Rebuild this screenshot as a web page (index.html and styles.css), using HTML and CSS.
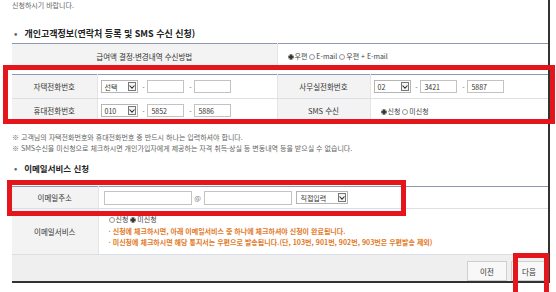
FILE: index.html
```html
<!DOCTYPE html>
<html lang="ko">
<head>
    <meta charset="UTF-8">
    <title>개인고객정보 신청</title>
    <link rel="stylesheet" href="styles.css">
</head>
<body>
<div class="page">
    <div class="frame">
        <p class="intro">신청하시기 바랍니다.</p>

        <h3 class="sec-title">개인고객정보(연락처 등록 및 SMS 수신 신청)</h3>
        <table class="form-table">
            <tr class="row-a">
                <th class="th-wide">급여액 결정·변경내역 수신방법</th>
                <td class="td-pad"><span class="radio on"></span>우편 <span class="radio"></span>E-mail <span class="radio"></span>우편 + E-mail</td>
            </tr>
        </table>

        <table class="form-table phone-table">
            <colgroup>
                <col style="width:85px"><col style="width:180px"><col style="width:93px"><col>
            </colgroup>
            <tr>
                <th>자택전화번호</th>
                <td>
                    <span class="sel"><span class="sel-text">선택</span><span class="arr"><svg width="6" height="4" viewBox="0 0 6 4"><path d="M0.5 0.5 L3 3.2 L5.5 0.5" fill="none" stroke="#333" stroke-width="1.1"/></svg></span></span>
                    <span class="dash">-</span><input class="num" type="text" value="">
                    <span class="dash">-</span><input class="num" type="text" value="">
                </td>
                <th>사무실전화번호</th>
                <td>
                    <span class="sel"><span class="sel-text">02</span><span class="arr"><svg width="6" height="4" viewBox="0 0 6 4"><path d="M0.5 0.5 L3 3.2 L5.5 0.5" fill="none" stroke="#333" stroke-width="1.1"/></svg></span></span>
                    <span class="dash">-</span><input class="num" type="text" value="3421">
                    <span class="dash">-</span><input class="num" type="text" value="5887">
                </td>
            </tr>
            <tr>
                <th>휴대전화번호</th>
                <td>
                    <span class="sel"><span class="sel-text">010</span><span class="arr"><svg width="6" height="4" viewBox="0 0 6 4"><path d="M0.5 0.5 L3 3.2 L5.5 0.5" fill="none" stroke="#333" stroke-width="1.1"/></svg></span></span>
                    <span class="dash">-</span><input class="num" type="text" value="5852">
                    <span class="dash">-</span><input class="num" type="text" value="5886">
                </td>
                <th>SMS 수신</th>
                <td class="td-pad"><span class="radio on"></span>신청 <span class="radio"></span>미신청</td>
            </tr>
        </table>

        <div class="notes">
            <p>※ 고객님의 자택전화번호와 휴대전화번호 중 반드시 하나는 입력하셔야 합니다.</p>
            <p>※ SMS수신을 미신청으로 체크하시면 개인가입자에게 제공하는 자격 취득·상실 등 변동내역 등을 받으실 수 없습니다.</p>
        </div>

        <h3 class="sec-title sec-two">이메일서비스 신청</h3>
        <table class="form-table email-table">
            <colgroup>
                <col style="width:86px"><col>
            </colgroup>
            <tr class="row-mail">
                <th>이메일주소</th>
                <td>
                    <input class="mail" type="text" value=""><span class="at">@</span><input class="mail" type="text" value="">
                    <span class="sel sel-mail"><span class="sel-text">직접입력</span><span class="arr"><svg width="6" height="4" viewBox="0 0 6 4"><path d="M0.5 0.5 L3 3.2 L5.5 0.5" fill="none" stroke="#333" stroke-width="1.1"/></svg></span></span>
                </td>
            </tr>
            <tr class="row-service">
                <th>이메일서비스</th>
                <td class="td-pad">
                    <p class="line"><span class="radio"></span>신청 <span class="radio on"></span>미신청</p>
                    <p class="line warn">· 신청에 체크하시면, 아래 이메일서비스 중 하나에 체크하셔야 신청이 완료됩니다.</p>
                    <p class="line warn">· 미신청에 체크하시면 해당 통지서는 우편으로 발송됩니다.(단, 103번, 901번, 902번, 903번은 우편발송 제외)</p>
                </td>
            </tr>
        </table>

        <div class="footer">
            <button class="btn">이전</button>
            <button class="btn btn-next">다음</button>
        </div>
    </div>

    <!-- red highlight marks drawn over the form -->
    <div class="mark mark-phone"></div>
    <div class="mark mark-mail"></div>
    <div class="mark mark-next"></div>
</div>
</body>
</html>
```

FILE: styles.css
```css
* {
    box-sizing: border-box;
}
body {
    margin: 0;
    background: #fff;
    font-family: "Noto Sans CJK KR", "Noto Sans", sans-serif;
    color: #333;
}
.page {
    position: relative;
    width: 556px;
    height: 292px;
    overflow: hidden;
}
.frame {
    margin-left: 12px;
    width: 538px;
    height: 283px;
    border-right: 2px solid #2f3433;
    display: flex;
    flex-direction: column;
}
.intro {
    margin: 0;
    font-size: 7px;
    line-height: 11px;
    color: #666;
}
.sec-title {
    margin: 16px 0 3px;
    padding-left: 2px;
    font-size: 9px;
    line-height: 13px;
    font-weight: bold;
    color: #222;
}
.sec-title::before {
    content: "•";
    margin-right: 7px;
    color: #666;
}
.sec-two {
    margin: 8px 0 11px;
    font-size: 8.5px;
}
.form-table {
    width: 536px;
    border-collapse: collapse;
    border-top: 1px solid #8f98ae;
    font-size: 7px;
    table-layout: fixed;
}
.form-table th, .form-table td {
    border-bottom: 1px solid #dcdfe6;
    padding: 0 0 0 3px;
    height: 24px;
    white-space: nowrap;
}
.form-table th {
    background: #f3f3f3;
    font-weight: normal;
    font-size: 7.5px;
    color: #333;
    text-align: center;
    border-right: 1px solid #e4e4e4;
    padding: 0;
}
.form-table td + th {
    border-left: 1px solid #e4e4e4;
}
.row-a th, .row-a td {
    height: 25px;
}
.th-wide {
    width: 265px;
}
.td-pad {
    padding-left: 10px !important;
    color: #444;
}
.phone-table {
    margin-top: 5px;
}
.radio {
    display: inline-block;
    width: 6px;
    height: 6px;
    border: 1px solid #999;
    border-radius: 50%;
    margin-right: 1px;
    vertical-align: -1px;
    background: #fff;
}
.radio.on {
    background: radial-gradient(circle, #333 0 1.6px, #fff 1.8px);
    border-color: #777;
}
.sel {
    display: inline-flex;
    align-items: center;
    justify-content: space-between;
    width: 37px;
    height: 13px;
    border: 1px solid #b5b5b5;
    background: #fff;
    vertical-align: middle;
    color: #333;
}
.sel-text {
    padding-left: 3px;
    font-size: 7px;
}
.arr {
    display: flex;
    align-items: center;
    justify-content: center;
    width: 8px;
    height: 9px;
    margin-right: 1px;
    border: 1px solid #777;
    background: #f4f4f4;
}
.dash {
    display: inline-block;
    width: 8px;
    text-align: center;
    color: #666;
    vertical-align: middle;
}
.num {
    width: 37px;
    height: 13px;
    border: 1px solid #c3c3c3;
    padding: 0 3px;
    font: 7px "Noto Sans CJK KR", sans-serif;
    color: #333;
    vertical-align: middle;
    outline: none;
}
.notes {
    margin-top: 9px;
    padding-left: 0;
}
.notes p {
    margin: 0;
    font-size: 7px;
    line-height: 11px;
    color: #666;
}
.email-table td {
    padding-left: 5px;
}
.row-mail th, .row-mail td {
    height: 22px;
}
.row-service th, .row-service td {
    height: 46px;
}
.mail {
    width: 88px;
    height: 14px;
    border: 1px solid #c3c3c3;
    vertical-align: middle;
    outline: none;
}
.at {
    display: inline-block;
    width: 12px;
    text-align: center;
    color: #777;
    vertical-align: middle;
}
.sel-mail {
    width: 52px;
    margin-left: 3px;
}
.line {
    margin: 0;
    line-height: 11.5px;
}
.warn {
    color: #e2791f;
    font-weight: bold;
}
.footer {
    height: 30px;
    background: #efefef;
    border-bottom: 2px solid #2f3433;
    display: flex;
    justify-content: flex-end;
    align-items: flex-end;
    gap: 4px;
    padding-right: 1px;
}
.btn {
    width: 40px;
    height: 20px;
    margin-bottom: 0;
    border: 1px solid #cfcfcf;
    background: #f8f8f8;
    font: 7.5px "Noto Sans CJK KR", sans-serif;
    color: #333;
}
.btn-next {
    width: 36px;
}
.mark {
    position: absolute;
    border: 5px solid #e4161c;
}
.mark-phone {
    left: 3px;
    top: 65px;
    width: 552px;
    height: 59px;
}
.mark-mail {
    left: 7px;
    top: 180px;
    width: 399px;
    height: 36px;
}
.mark-next {
    left: 513px;
    top: 253px;
    width: 36px;
    height: 45px;
}
```
